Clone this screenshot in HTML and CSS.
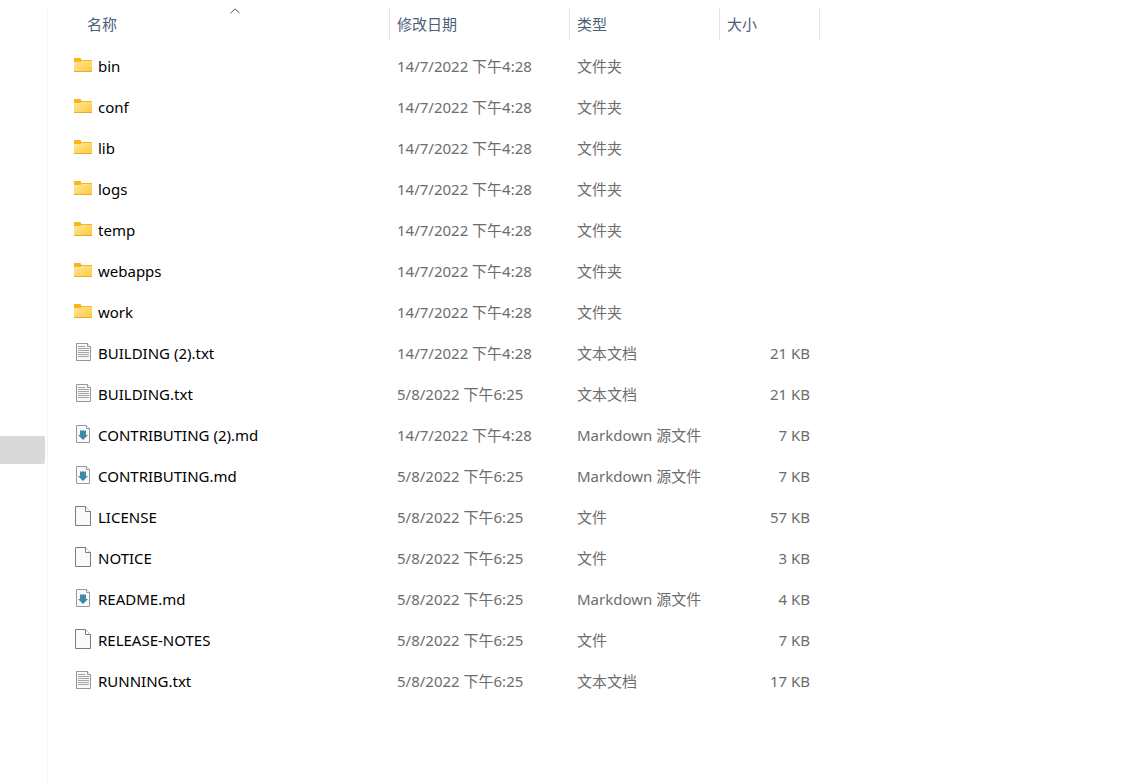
FILE: index.html
```html
<!DOCTYPE html>
<html lang="zh-CN">
<head>
<meta charset="utf-8">
<meta name="viewport" content="width=device-width, initial-scale=1">
<title>文件列表</title>
<link rel="stylesheet" href="styles.css">
</head>
<body>
<svg class="sprite" aria-hidden="true">
  <defs>
    <linearGradient id="folder-fill" x1="0" y1="0" x2="1" y2="1">
      <stop offset="0" stop-color="#ffe9a0"/>
      <stop offset="1" stop-color="#ffc93c"/>
    </linearGradient>
    <symbol id="folder" viewBox="0 0 18 20">
      <path d="M0 3h6.500l1 2H18v3H0z" fill="#f9b51b"/>
      <path d="M0 7h6.500l1-1H18v10H0z" fill="url(#folder-fill)"/>
      <path d="M0 16h18v1H0z" fill="#e9ab35"/>
    </symbol>
    <symbol id="text" viewBox="0 0 18 20">
      <path d="M2.500 1.500h11l3 3v14h-14z" fill="#f8f8f8" stroke="#969696"/>
      <path d="M13.500 1.500v3h3" fill="#fff" stroke="#969696"/>
      <path d="M4 4.500h7M4 6.500h11M4 8.500h11M4 10.500h11M4 12.500h11M4 14.500h11" stroke="#a4a4a4"/>
    </symbol>
    <symbol id="markdown" viewBox="0 0 18 20">
      <path d="M2.500 1.500h10l3 3v14h-13z" fill="#fafafa" stroke="#989898"/>
      <path d="M12.500 1.500v3h3" fill="#fff" stroke="#989898"/>
      <path d="M6 6l1.500 1L9 6l1.500 1L12 6v5h2l-5 5-5-5h2z" fill="#4088a8"/>
    </symbol>
    <symbol id="file" viewBox="0 0 18 20">
      <path d="M1.500.5h10l5 5v14h-15z" fill="#fafafa" stroke="#7c7c7c"/>
      <path d="M11.500.5v5h5" fill="#fff" stroke="#7c7c7c"/>
    </symbol>
  </defs>
</svg>
<div class="explorer">
  <nav class="tree" aria-label="导航窗格"><div class="tree-selected"></div></nav>
  <main class="content">
    <table class="files">
      <colgroup><col class="col-name"><col class="col-date"><col class="col-type"><col class="col-size"></colgroup>
      <thead>
        <tr>
          <th aria-sort="ascending"><button class="head head-name" type="button">名称<svg class="caret" viewBox="0 0 10 6" aria-hidden="true"><path d="M.5 5.200L5 .9l4.500 4.300" fill="none" stroke="#555"/></svg></button></th>
          <th><button class="head" type="button">修改日期</button></th>
          <th><button class="head" type="button">类型</button></th>
          <th><button class="head" type="button">大小</button></th>
        </tr>
      </thead>
      <tbody>
        <tr><td><div class="name"><svg class="icon"><use href="#folder"/></svg>bin</div></td><td>14/7/2022 下午4:28</td><td>文件夹</td><td></td></tr>
        <tr><td><div class="name"><svg class="icon"><use href="#folder"/></svg>conf</div></td><td>14/7/2022 下午4:28</td><td>文件夹</td><td></td></tr>
        <tr><td><div class="name"><svg class="icon"><use href="#folder"/></svg>lib</div></td><td>14/7/2022 下午4:28</td><td>文件夹</td><td></td></tr>
        <tr><td><div class="name"><svg class="icon"><use href="#folder"/></svg>logs</div></td><td>14/7/2022 下午4:28</td><td>文件夹</td><td></td></tr>
        <tr><td><div class="name"><svg class="icon"><use href="#folder"/></svg>temp</div></td><td>14/7/2022 下午4:28</td><td>文件夹</td><td></td></tr>
        <tr><td><div class="name"><svg class="icon"><use href="#folder"/></svg>webapps</div></td><td>14/7/2022 下午4:28</td><td>文件夹</td><td></td></tr>
        <tr><td><div class="name"><svg class="icon"><use href="#folder"/></svg>work</div></td><td>14/7/2022 下午4:28</td><td>文件夹</td><td></td></tr>
        <tr><td><div class="name"><svg class="icon"><use href="#text"/></svg>BUILDING (2).txt</div></td><td>14/7/2022 下午4:28</td><td>文本文档</td><td class="size">21 KB</td></tr>
        <tr><td><div class="name"><svg class="icon"><use href="#text"/></svg>BUILDING.txt</div></td><td>5/8/2022 下午6:25</td><td>文本文档</td><td class="size">21 KB</td></tr>
        <tr><td><div class="name"><svg class="icon"><use href="#markdown"/></svg>CONTRIBUTING (2).md</div></td><td>14/7/2022 下午4:28</td><td>Markdown 源文件</td><td class="size">7 KB</td></tr>
        <tr><td><div class="name"><svg class="icon"><use href="#markdown"/></svg>CONTRIBUTING.md</div></td><td>5/8/2022 下午6:25</td><td>Markdown 源文件</td><td class="size">7 KB</td></tr>
        <tr><td><div class="name"><svg class="icon"><use href="#file"/></svg>LICENSE</div></td><td>5/8/2022 下午6:25</td><td>文件</td><td class="size">57 KB</td></tr>
        <tr><td><div class="name"><svg class="icon"><use href="#file"/></svg>NOTICE</div></td><td>5/8/2022 下午6:25</td><td>文件</td><td class="size">3 KB</td></tr>
        <tr><td><div class="name"><svg class="icon"><use href="#markdown"/></svg>README.md</div></td><td>5/8/2022 下午6:25</td><td>Markdown 源文件</td><td class="size">4 KB</td></tr>
        <tr><td><div class="name"><svg class="icon"><use href="#file"/></svg>RELEASE-NOTES</div></td><td>5/8/2022 下午6:25</td><td>文件</td><td class="size">7 KB</td></tr>
        <tr><td><div class="name"><svg class="icon"><use href="#text"/></svg>RUNNING.txt</div></td><td>5/8/2022 下午6:25</td><td>文本文档</td><td class="size">17 KB</td></tr>
      </tbody>
    </table>
  </main>
</div>
</body>
</html>
```

FILE: styles.css
```css
* {
  box-sizing: border-box;
}

body {
  margin: 0;
  background: #fff;
  color: #6d6d6d;
  font: 15px/20px "Noto Sans", "Noto Sans CJK SC", sans-serif;
}

.sprite {
  position: absolute;
  width: 0;
  height: 0;
}

.explorer {
  display: flex;
  min-height: 100vh;
  padding-top: 8px;
}

.tree {
  flex: none;
  width: 48px;
  padding: 428px 2px 0 0;
  border-right: 1px solid #f5f5f5;
}

.tree-selected {
  height: 28px;
  border-radius: 0 2px 2px 0;
  background: #d9d9d9;
}

.content {
  flex: 1;
  min-width: 0;
}

.files {
  table-layout: fixed;
  width: 772px;
  border-collapse: collapse;
}

.col-name { width: 342px; }
.col-date { width: 180px; }
.col-type { width: 150px; }
.col-size { width: 100px; }

th {
  padding: 0 0 6px;
  font-weight: 400;
}

.head {
  position: relative;
  display: block;
  width: 100%;
  height: 32px;
  padding: 0 7px;
  border: 0;
  border-right: 1px solid #e5e5e5;
  background: none;
  color: #4c607a;
  font: inherit;
  text-align: left;
}

.head-name {
  padding-left: 39px;
}

.caret {
  position: absolute;
  top: 0;
  left: 182px;
  width: 10px;
  height: 6px;
}

td {
  height: 41px;
  padding: 0 10px 1px 7px;
  white-space: nowrap;
}

td:first-child {
  padding-left: 26px;
}

.name {
  display: flex;
  align-items: flex-start;
  gap: 6px;
  height: 22px;
  color: #000;
  line-height: 22px;
}

.icon {
  flex: none;
  width: 18px;
  height: 20px;
}

.size {
  text-align: right;
}
```
